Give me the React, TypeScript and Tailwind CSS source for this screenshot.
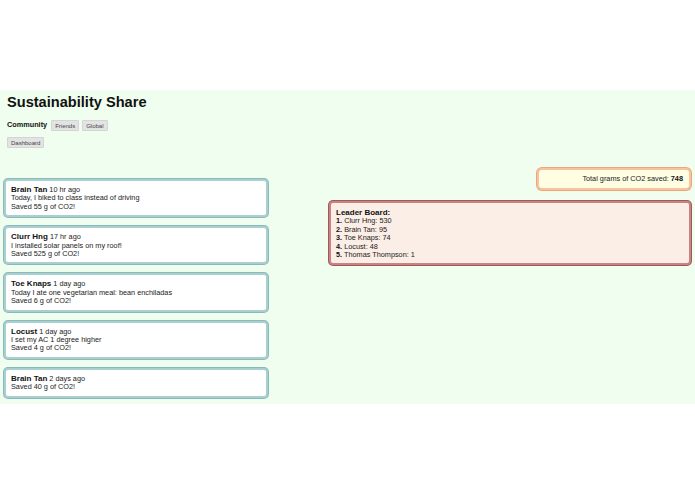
const feed = [
  { name: 'Brain Tan', when: '10 hr ago', text: 'Today, I biked to class instead of driving', saved: 55 },
  { name: 'Clurr Hng', when: '17 hr ago', text: 'I installed solar panels on my roof!', saved: 525 },
  { name: 'Toe Knaps', when: '1 day ago', text: 'Today I ate one vegetarian meal: bean enchiladas', saved: 6 },
  { name: 'Locust', when: '1 day ago', text: 'I set my AC 1 degree higher', saved: 4 },
  { name: 'Brain Tan', when: '2 days ago', text: '', saved: 40 },
]

const leaders = [
  { name: 'Clurr Hng', score: 530 },
  { name: 'Brain Tan', score: 95 },
  { name: 'Toe Knaps', score: 74 },
  { name: 'Locust', score: 48 },
  { name: 'Thomas Thompson', score: 1 },
]

const totalSaved = 748

function Btn({ label }: { label: string }) {
  return (
    <button className="h-[11px] px-[3px] bg-[#e3e3e3] border border-[#d4d4d4] rounded-[1px] text-[6px] leading-none text-[#444]">
      {label}
    </button>
  )
}

export default function App() {
  return (
    <div className="w-[695px] h-[494px] bg-white font-['Liberation_Sans',Arial,sans-serif] text-[#111]">
      <div className="h-[90px]" />
      <div className="h-[314px] bg-[#effeef] pt-[4px]">
        <div className="px-[7px]">
          <h1 className="text-[14.6px] leading-[17px] font-bold">Sustainability Share</h1>
          <div className="flex items-center gap-[3px] mt-[9px]">
            <span className="text-[7.3px] font-bold mr-[1px]">Community</span>
            <Btn label="Friends" />
            <Btn label="Global" />
          </div>
          <div className="mt-[6px] flex">
            <Btn label="Dashboard" />
          </div>
        </div>

        <div className="flex items-start mt-[20px]">
          {/* feed */}
          <div className="w-[264px] ml-[4px] mt-[11px] flex flex-col gap-[9px]">
            {feed.map((p, i) => (
              <div
                key={i}
                className="bg-white border-2 border-[#a9d0d0] shadow-[0_0_0_1px_#8cbaba] rounded-[4px] px-[5px] pt-[5px] pb-[4px] text-[7.3px] leading-[8.4px] text-[#222]"
              >
                <div>
                  <span className="text-[8px] font-bold text-[#111]">{p.name}</span> {p.when}
                </div>
                {p.text && <div>{p.text}</div>}
                <div>Saved {p.saved} g of CO2!</div>
              </div>
            ))}
          </div>

          {/* right column */}
          <div className="flex-1 ml-[61px] mr-[4px] flex flex-col items-end">
            <div className="w-[154px] h-[22px] bg-[#fffde2] border-2 border-[#f8c4a0] shadow-[0_0_0_1px_#efa57c] rounded-[5px] flex items-center justify-end pr-[6px] text-[7.3px] text-[#222]">
              Total grams of CO2 saved:&nbsp;<b className="text-[#111]">{totalSaved}</b>
            </div>
            <div className="w-full mt-[11px] bg-[#fbeee6] border-2 border-[#c88484] shadow-[0_0_0_1px_#a25858] rounded-[4px] px-[5px] pt-[6px] pb-[4px] text-[7.3px] leading-[8.4px] text-[#222]">
              <div className="text-[8px] font-bold text-[#111]">Leader Board:</div>
              {leaders.map((l, i) => (
                <div key={i}>
                  <b className="text-[#111]">{i + 1}.</b> {l.name}: {l.score}
                </div>
              ))}
            </div>
          </div>
        </div>
      </div>
    </div>
  )
}
